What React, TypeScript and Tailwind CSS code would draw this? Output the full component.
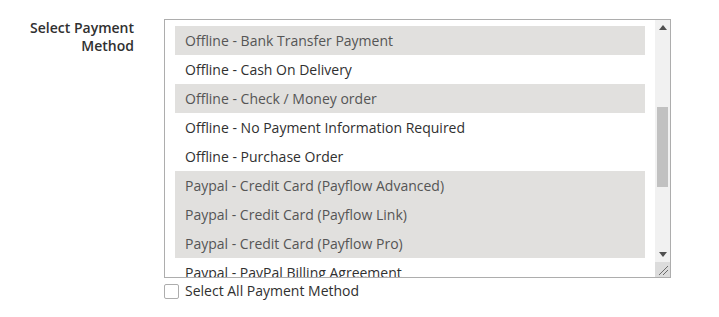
import React from 'react';

const options = [
  { label: 'Offline - Bank Transfer Payment', selected: true },
  { label: 'Offline - Cash On Delivery', selected: false },
  { label: 'Offline - Check / Money order', selected: true },
  { label: 'Offline - No Payment Information Required', selected: false },
  { label: 'Offline - Purchase Order', selected: false },
  { label: 'Paypal - Credit Card (Payflow Advanced)', selected: true },
  { label: 'Paypal - Credit Card (Payflow Link)', selected: true },
  { label: 'Paypal - Credit Card (Payflow Pro)', selected: true },
  { label: 'Paypal - PayPal Billing Agreement', selected: false },
];

function Scrollbar() {
  return (
    <div className="flex w-[15px] flex-col bg-[#f1f1f1]">
      <div className="flex h-[15px] items-center justify-center">
        <svg width="8" height="5" viewBox="0 0 8 5">
          <path d="M0 5 L4 0 L8 5 Z" fill="#505050" />
        </svg>
      </div>
      <div className="flex-1 px-[2px] pt-[72px]">
        <div className="h-[80px] bg-[#c1c1c1]" />
      </div>
      <div className="flex h-[15px] items-center justify-center">
        <svg width="8" height="5" viewBox="0 0 8 5">
          <path d="M0 0 L4 5 L8 0 Z" fill="#505050" />
        </svg>
      </div>
      <div className="flex h-[15px] items-end justify-end bg-[#dcdcdc] p-[2px]">
        <svg width="10" height="10" viewBox="0 0 10 10">
          <path d="M1 10 L10 1 M5 10 L10 5" stroke="#6b6b6b" strokeWidth="1" />
        </svg>
      </div>
    </div>
  );
}

export default function App() {
  return (
    <div
      className="min-h-[317px] bg-white pt-[19px] text-[14px] text-[#303030]"
      style={{ fontFamily: '"Open Sans", "Liberation Sans", sans-serif' }}
    >
      <div className="flex">
        <div className="w-[134px] text-right font-semibold leading-[18px]">
          Select Payment
          <br />
          Method
        </div>
        <div className="ml-[30px]">
          <div className="flex h-[259px] w-[507px] border border-[#adadad]">
            <div className="flex-1 overflow-hidden px-[10px] pt-[6px]">
              {options.map((o) => (
                <div
                  key={o.label}
                  className={`flex h-[29px] items-center whitespace-nowrap px-[10px] ${
                    o.selected ? 'bg-[#e1e0de] text-[#555555]' : 'text-[#303030]'
                  }`}
                >
                  {o.label}
                </div>
              ))}
            </div>
            <Scrollbar />
          </div>
          <label className="mt-[3px] flex items-center gap-[6px] leading-[20px]">
            <span className="h-[15px] w-[15px] rounded-[2px] border border-[#adadad] bg-white" />
            <span className="text-[#303030]">Select All Payment Method</span>
          </label>
        </div>
      </div>
    </div>
  );
}
